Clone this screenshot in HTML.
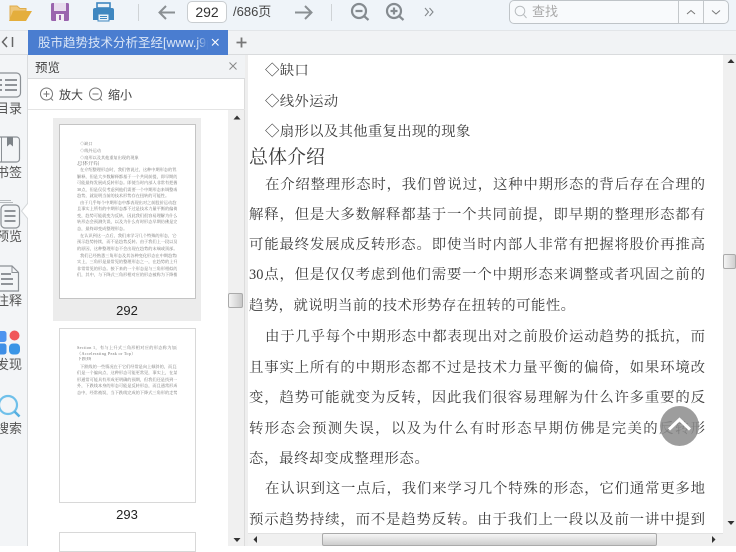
<!DOCTYPE html>
<html lang="zh"><head><meta charset="utf-8">
<style>
*{box-sizing:border-box}
html,body{margin:0;padding:0}
body{width:736px;height:546px;overflow:hidden;position:relative;background:#fff;font-family:"Liberation Sans","Noto Sans CJK SC",sans-serif;color:#444}
.a{position:absolute}
svg{position:absolute;overflow:visible}
.l{position:absolute;font-family:"Liberation Serif","Noto Serif CJK SC",serif;font-size:14.4px;line-height:20px;height:20px;color:#3c3c3c;white-space:nowrap;text-align:justify;text-align-last:justify;text-justify:inter-character}
.s{position:absolute;font-family:"Liberation Serif","Noto Serif CJK SC",serif;font-size:14.4px;line-height:20px;color:#3c3c3c;white-space:nowrap;letter-spacing:.3px}
.side{position:absolute;left:-5px;width:28px;text-align:center;font-size:13px;line-height:16px;color:#555;white-space:nowrap}
.t{position:absolute;font-family:"Liberation Serif","Noto Serif CJK SC",serif;font-size:4.2px;line-height:5px;height:5px;color:#777;white-space:nowrap;overflow:hidden;text-align:justify;text-align-last:justify;text-justify:inter-character}
</style></head><body>

<!-- toolbar -->
<div class="a" style="left:0;top:0;width:736px;height:31px;background:#eff4f9;border-bottom:1px solid #e2e5e8"></div>
<svg style="left:0;top:0" width="736" height="31">
 <path d="M10 20V6h7l3 2.500h6V11H14L10 20Z" fill="#efc77a" stroke="#e0ad4a" stroke-width="1"/>
 <path d="M13 11H32L26 21H9Z" fill="#e4ae3c"/>
 <rect x="51" y="3" width="18" height="18" rx="1.500" fill="#9a64ae"/>
 <rect x="54" y="3" width="12" height="8" fill="#e8dcee"/>
 <rect x="56" y="14" width="8" height="7" fill="#f3eef5"/><rect x="59" y="15" width="2" height="5" fill="#9a64ae"/>
 <rect x="97" y="3" width="13" height="5" fill="none" stroke="#3f87c0" stroke-width="1.600"/>
 <path d="M93 10a2 2 0 0 1 2-2h17a2 2 0 0 1 2 2v10h-21Z" fill="#3f87c0"/>
 <rect x="98" y="14" width="11" height="7" fill="#eaf2f8" stroke="#3f87c0"/><path d="M100 16.500h7M100 18.500h7" stroke="#3f87c0"/>
 <path d="M138.500 4v17" stroke="#cfd3d6"/>
 <path d="M175 12.500H160M166 6l-6.500 6.500L166 19" fill="none" stroke="#8a8f93" stroke-width="2"/>
 <path d="M295 12.500H311M305 6l6.500 6.500L305 19" fill="none" stroke="#8a8f93" stroke-width="2"/>
 <path d="M331.500 4v17" stroke="#cfd3d6"/>
 <circle cx="359" cy="11" r="7" fill="none" stroke="#858b90" stroke-width="2.200"/><path d="M364 16l4.500 4M355.500 11h7" stroke="#858b90" stroke-width="2.200"/>
 <circle cx="394" cy="11" r="7" fill="none" stroke="#858b90" stroke-width="2.200"/><path d="M399 16l4.500 4M390.500 11h7M394 7.500v7" stroke="#858b90" stroke-width="2.200"/>
 <path d="M425 8l3.500 4-3.500 4M429.500 8l3.500 4-3.500 4" fill="none" stroke="#83888c" stroke-width="1.100"/>
</svg>
<div class="a" style="left:187px;top:1px;width:40px;height:22px;background:#fff;border:1px solid #c9cdd0;border-radius:5px;text-align:center;font-size:14px;line-height:21px;color:#333">292</div>
<div class="a" style="left:233px;top:3px;font-size:13px;line-height:18px;color:#444">/686页</div>
<div class="a" style="left:509px;top:0;width:220px;height:24px;background:#f8fafc;border:1px solid #bfc4c8;border-radius:5px"></div>
<div class="a" style="left:678px;top:1px;width:1px;height:22px;background:#c4c8cb"></div>
<div class="a" style="left:703px;top:1px;width:1px;height:22px;background:#c4c8cb"></div>
<svg style="left:0;top:0" width="736" height="31">
 <circle cx="520" cy="11" r="4.800" fill="none" stroke="#b9bdc0"/><path d="M523.500 14.500l3 3.500" stroke="#b9bdc0"/>
 <path d="M687 14l4-3.500 4 3.500" fill="none" stroke="#777" stroke-width="1"/>
 <path d="M712 10.500l4 3.500 4-3.500" fill="none" stroke="#777" stroke-width="1"/>
</svg>
<div class="a" style="left:532px;top:3px;font-size:13px;line-height:18px;color:#aaa">查找</div>

<!-- tab bar -->
<div class="a" style="left:0;top:31px;width:736px;height:24px;background:#f1f3f5;border-bottom:1px solid #d9dbdd"></div>
<svg style="left:0;top:31px" width="30" height="24"><path d="M7 6l-4.500 5L7 16" fill="none" stroke="#666" stroke-width="1.500"/><path d="M12.500 6v10" stroke="#666" stroke-width="1.500"/></svg>
<div class="a" style="left:28px;top:30px;width:200px;height:25px;background:#4a7dd0"></div>
<div class="a" style="left:38px;top:33px;width:170px;height:20px;overflow:hidden;color:#dbe6f6;font-size:12.500px;line-height:20px;white-space:nowrap">股市趋势技术分析圣经[www.j9p</div>
<div class="a" style="left:196px;top:33px;width:12px;height:20px;background:linear-gradient(90deg,rgba(74,125,208,0),#4a7dd0)"></div>
<svg style="left:0;top:30px" width="260" height="25"><path d="M212 9l6.500 6.500M218.500 9L212 15.500" stroke="#fff" stroke-width="1.100"/><path d="M241.500 7.500v10M236.500 12.500h10" stroke="#777" stroke-width="1.800"/></svg>

<!-- left rail -->
<div class="a" style="left:0;top:55px;width:28px;height:491px;background:#f3f5f7;border-right:1px solid #d9dbdd"></div>
<svg style="left:0;top:55px" width="29" height="491">
 <rect x="-6" y="18" width="26.500" height="24" rx="4" fill="none" stroke="#8b9095" stroke-width="1.200"/>
 <path d="M0 25h2M5 25h12M0 30h2M5 30h12M0 35h2M5 35h12" stroke="#6f757a" stroke-width="1.600"/>
 <rect x="-6" y="82" width="25.500" height="25" rx="3" fill="#f3f5f7" stroke="#8b9095" stroke-width="1.200"/>
 <path d="M1.500 82v25" stroke="#8b9095"/><path d="M7 82v9.500l3-2.500 3 2.500V82Z" fill="#7d8388"/>
 <rect x="1" y="150" width="18.500" height="23" rx="4" fill="#f3f5f7" stroke="#8b9095" stroke-width="1.200"/>
 <path d="M-2 147.500h15M-2 145.500h13" stroke="#b5b9bc"/>
 <path d="M4.500 156h11M4.500 161h11M4.500 166h11" stroke="#6f757a" stroke-width="1.500"/>
 <path d="M28 148l-6.500 8 6.500 8" fill="#fff" stroke="#d5d8da"/>
 <path d="M-4 211H12l6.500 6.500V236H-4Z" fill="#f3f5f7" stroke="#8b9095" stroke-width="1.200"/>
 <path d="M12 211v6.500h6.500" fill="none" stroke="#8b9095"/>
 <path d="M1 219h10M1 224h12M1 229h12" stroke="#6f757a" stroke-width="1.400"/>
 <rect x="-5" y="276" width="11.500" height="11" rx="2.500" fill="#4e94ef"/>
 <circle cx="14.500" cy="280.500" r="5" fill="#f0575a"/>
 <rect x="-5" y="288.500" width="11.500" height="11" rx="2.500" fill="#3f8fe6"/>
 <rect x="9" y="288.500" width="11" height="11" rx="4" fill="#3a95e6"/>
 <circle cx="8" cy="350" r="9" fill="none" stroke="#6fc0ea" stroke-width="2.200"/>
 <path d="M14.500 356.500l5 5" stroke="#55aee0" stroke-width="2.600"/>
</svg>
<div class="side" style="top:101px">目录</div>
<div class="side" style="top:165px">书签</div>
<div class="side" style="top:229px">预览</div>
<div class="side" style="top:293px">注释</div>
<div class="side" style="top:357px">发现</div>
<div class="side" style="top:421px">搜索</div>

<!-- preview panel -->
<div class="a" style="left:28px;top:55px;width:217px;height:491px;background:#fff;border-right:1px solid #dcdcdc"></div>
<div class="a" style="left:28px;top:55px;width:217px;height:24px;background:#f1f3f5;border-bottom:1px solid #d9dbdd"></div>
<div class="a" style="left:35px;top:58px;font-size:12.500px;line-height:20px;color:#444">预览</div>
<svg style="left:0;top:55px" width="245" height="60">
 <path d="M229.500 7.500l7 7M236.500 7.500l-7 7" stroke="#888" stroke-width="1"/>
 <circle cx="46.500" cy="39" r="6" fill="none" stroke="#777"/><path d="M51 43.500l2 2M43.500 39h6M46.500 36v6" stroke="#777"/>
 <circle cx="95.500" cy="39" r="6" fill="none" stroke="#777"/><path d="M100 43.500l2 2M92.500 39h6" stroke="#777"/>
</svg>
<div class="a" style="left:59px;top:86px;font-size:12px;line-height:18px;color:#444">放大</div>
<div class="a" style="left:108px;top:86px;font-size:12px;line-height:18px;color:#444">缩小</div>
<div class="a" style="left:28px;top:109px;width:217px;height:1px;background:#e4e4e4"></div>

<!-- thumb 292 -->
<div class="a" style="left:53px;top:118px;width:148px;height:203px;background:#ececec"></div>
<div class="a" style="left:59px;top:124px;width:137px;height:175px;background:#fff;border:1px solid #c4c4c4"></div>
<div class="a" style="left:53px;top:302px;width:148px;text-align:center;font-size:13px;line-height:17px;color:#222">292</div>
<div class="t" style="left:80px;top:141px;text-align-last:left">◇缺口</div>
<div class="t" style="left:80px;top:148px;text-align-last:left">◇线外运动</div>
<div class="t" style="left:80px;top:155px;text-align-last:left">◇扇形以及其他重复出现的现象</div>
<div class="t" style="left:77px;top:161px;font-size:5.500px;line-height:6px;height:6px;text-align-last:left">总体介绍</div>
<div class="t" style="left:80px;top:167px;width:97px">在介绍整理形态时，我们曾说过，这种中期形态的背后存在合理的</div>
<div class="t" style="left:77px;top:174px;width:100px">解释，但是大多数解释都基于一个共同前提，即早期的整理形态都有</div>
<div class="t" style="left:77px;top:180px;width:100px">可能最终发展成反转形态。即使当时内部人非常有把握将股价再推高</div>
<div class="t" style="left:77px;top:187px;width:100px">30点，但是仅仅考虑到他们需要一个中期形态来调整或者巩固之前的</div>
<div class="t" style="left:77px;top:193px;text-align-last:left">趋势，就说明当前的技术形势存在扭转的可能性。</div>
<div class="t" style="left:80px;top:200px;width:97px">由于几乎每个中期形态中都表现出对之前股价运动趋势的抵抗，而</div>
<div class="t" style="left:77px;top:206px;width:100px">且事实上所有的中期形态都不过是技术力量平衡的偏倚，如果环境改</div>
<div class="t" style="left:77px;top:213px;width:100px">变，趋势可能就变为反转，因此我们很容易理解为什么许多重要的反</div>
<div class="t" style="left:77px;top:219px;width:100px">转形态会预测失误，以及为什么有时形态早期仿佛是完美的反转形</div>
<div class="t" style="left:77px;top:226px;text-align-last:left">态，最终却变成整理形态。</div>
<div class="t" style="left:80px;top:233px;width:97px">在认识到这一点后，我们来学习几个特殊的形态，它们通常更多地</div>
<div class="t" style="left:77px;top:239px;width:100px">预示趋势持续，而不是趋势反转。由于我们上一段以及前一讲中提到</div>
<div class="t" style="left:77px;top:246px;text-align-last:left">的原因，这种整理形态不会出现在趋势的末端或顶部。</div>
<div class="t" style="left:80px;top:253px;width:97px">我们已经熟悉三角形态及其各种变化形态在中期趋势的作用，事</div>
<div class="t" style="left:77px;top:259px;width:100px">实上，三角形是最常见的整理形态之一，在趋势的上升或者下降中都</div>
<div class="t" style="left:77px;top:266px;width:100px">非常常见的形态。接下来的一个形态是与三角形相似的喇叭形，它</div>
<div class="t" style="left:77px;top:272px;width:100px">们，其中，与下降式三角形相对应的形态被称为下降楔（Drooping</div>

<!-- thumb 293 -->
<div class="a" style="left:59px;top:328px;width:137px;height:175px;background:#fff;border:1px solid #d8d8d8"></div>
<div class="a" style="left:53px;top:506px;width:148px;text-align:center;font-size:13px;line-height:17px;color:#222">293</div>
<div class="t" style="left:77px;top:345px;width:100px;letter-spacing:.3px">Section 1，有与上升式三角形相对应的形态称为加速顶</div>
<div class="t" style="left:77px;top:351px;text-align-last:left;letter-spacing:.3px">（Accelerating Peak or Top）</div>
<div class="t" style="left:77px;top:357px;font-size:4.800px;text-align-last:left">下跌线</div>
<div class="t" style="left:80px;top:364px;width:97px">下跌线的一些情况在于它们经常是向上倾斜的，而且形态是水平的</div>
<div class="t" style="left:77px;top:370px;width:100px">们是一个偏向点，这种形态可能更常见，事实上，在某些情况下，形</div>
<div class="t" style="left:77px;top:377px;width:100px">形通常可能具有形成更明确的预期，但我们还是找到一个相反点。另</div>
<div class="t" style="left:77px;top:383px;width:100px">外，下跌线本身的形态可能是反转形态，而且通常形成的是三角形</div>
<div class="t" style="left:77px;top:390px;width:100px">态中，经常被误，当下跌线完成的下降式三角形的走势时，它是</div>
<!-- thumb 294 top -->
<div class="a" style="left:59px;top:532px;width:137px;height:20px;background:#fff;border:1px solid #d8d8d8"></div>

<!-- preview scrollbar -->
<div class="a" style="left:228px;top:110px;width:16px;height:436px;background:#f0f0f0"></div>
<svg style="left:228px;top:110px" width="16" height="436">
 <path d="M5.500 9.500h7L9 5.500Z" fill="#333"/>
 <path d="M5.500 428h7L9 432Z" fill="#333"/>
</svg>
<div class="a" style="left:228px;top:293px;width:15px;height:15px;background:linear-gradient(90deg,#f4f4f4,#c8c8c8);border:1px solid #aaa;border-radius:2px"></div>

<!-- document -->
<div class="a" style="left:245px;top:55px;width:478px;height:480px;background:#fff"></div>
<div class="a" style="left:245px;top:55px;width:3px;height:491px;background:#eeeeee"></div>
<div class="s" style="left:265px;top:61px">◇缺口</div>
<div class="s" style="left:265px;top:92px">◇线外运动</div>
<div class="s" style="left:265px;top:122px">◇扇形以及其他重复出现的现象</div>
<div class="a" style="left:249px;top:146px;font-family:'Liberation Serif','Noto Serif CJK SC',serif;font-size:19px;line-height:24px;color:#3c3c3c;white-space:nowrap">总体介绍</div>
<div class="l" style="left:265px;width:440px;top:175px">在介绍整理形态时，我们曾说过，这种中期形态的背后存在合理的</div>
<div class="l" style="left:249px;width:456px;top:205px">解释，但是大多数解释都基于一个共同前提，即早期的整理形态都有</div>
<div class="l" style="left:249px;width:456px;top:235px">可能最终发展成反转形态。即使当时内部人非常有把握将股价再推高</div>
<div class="l" style="left:249px;width:456px;top:265px">30点，但是仅仅考虑到他们需要一个中期形态来调整或者巩固之前的</div>
<div class="s" style="left:249px;top:296px;letter-spacing:.45px">趋势，就说明当前的技术形势存在扭转的可能性。</div>
<div class="l" style="left:265px;width:440px;top:327px">由于几乎每个中期形态中都表现出对之前股价运动趋势的抵抗，而</div>
<div class="l" style="left:249px;width:456px;top:358px">且事实上所有的中期形态都不过是技术力量平衡的偏倚，如果环境改</div>
<div class="l" style="left:249px;width:456px;top:388px">变，趋势可能就变为反转，因此我们很容易理解为什么许多重要的反</div>
<div class="l" style="left:249px;width:456px;top:419px">转形态会预测失误，以及为什么有时形态早期仿佛是完美的反转形</div>
<div class="s" style="left:249px;top:449px;letter-spacing:.65px">态，最终却变成整理形态。</div>
<div class="l" style="left:265px;width:440px;top:479px">在认识到这一点后，我们来学习几个特殊的形态，它们通常更多地</div>
<div class="l" style="left:249px;width:456px;top:510px">预示趋势持续，而不是趋势反转。由于我们上一段以及前一讲中提到</div>

<!-- float up button -->
<div class="a" style="left:660px;top:406px;width:39px;height:40px;border-radius:50%;background:rgba(140,140,140,.85)"></div>
<svg style="left:660px;top:406px" width="39" height="40"><path d="M9 23.500l10.500-10 10.500 10" fill="none" stroke="#fff" stroke-width="3"/></svg>

<!-- doc scrollbars -->
<div class="a" style="left:723px;top:55px;width:13px;height:491px;background:#f0f0f0"></div>
<svg style="left:723px;top:55px" width="13" height="491">
 <path d="M4.500 8h7L8 4Z" fill="#333"/>
 <path d="M4.500 466h7L8 470Z" fill="#333"/>
</svg>
<div class="a" style="left:723px;top:254px;width:13px;height:15px;background:linear-gradient(90deg,#f4f4f4,#cfcfcf);border:1px solid #aaa;border-radius:2px"></div>
<div class="a" style="left:248px;top:533px;width:475px;height:13px;background:#f0f0f0;border-top:1px solid #e2e2e2"></div>
<svg style="left:248px;top:533px" width="475" height="13">
 <path d="M9 3v7L5.500 6.500Z" fill="#333"/>
 <path d="M464 3v7l3.500-3.500Z" fill="#333"/>
</svg>
<div class="a" style="left:322px;top:533px;width:335px;height:13px;background:linear-gradient(180deg,#f6f6f6,#cdcdcd);border:1px solid #aaa;border-radius:2px"></div>
</body></html>
